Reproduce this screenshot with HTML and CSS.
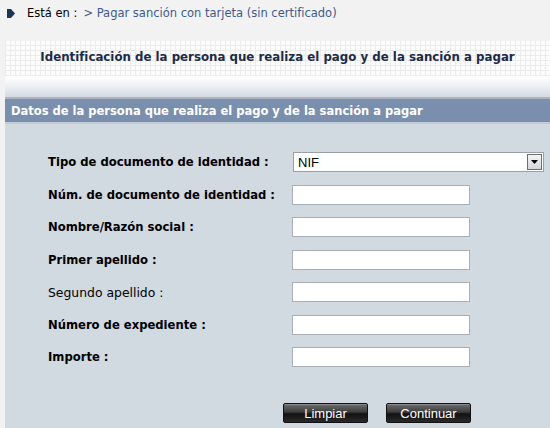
FILE: index.html
```html
<!DOCTYPE html>
<html lang="es">
<head>
<meta charset="utf-8">
<title>Pagar sanción con tarjeta</title>
<link rel="stylesheet" href="styles.css">
</head>
<body>
<div class="breadcrumb">
  <svg class="bc-icon" width="10" height="11" viewBox="0 0 10 11"><path d="M1 1 H5 L9 5.5 L5 10 H1 Z" fill="#1c3555"/></svg>
  <span class="bc-label">Está en :</span>
  <span class="bc-link">&gt; Pagar sanción con tarjeta (sin certificado)</span>
</div>
<div class="panel">
  <div class="panel-title">Identificación de la persona que realiza el pago y de la sanción a pagar</div>
  <div class="panel-fade"></div>
  <div class="section-head">Datos de la persona que realiza el pago y de la sanción a pagar</div>
  <div class="form">
    <div class="row">
      <label class="lbl">Tipo de documento de identidad :</label>
      <div class="select"><span class="select-val">NIF</span><span class="select-btn"><svg width="7" height="4" viewBox="0 0 7 4"><path d="M0 0 H7 L3.5 4 Z" fill="#000"/></svg></span></div>
    </div>
    <div class="row">
      <label class="lbl">Núm. de documento de identidad :</label>
      <input class="inp" type="text">
    </div>
    <div class="row">
      <label class="lbl">Nombre/Razón social :</label>
      <input class="inp" type="text">
    </div>
    <div class="row">
      <label class="lbl">Primer apellido :</label>
      <input class="inp" type="text">
    </div>
    <div class="row">
      <label class="lbl normal">Segundo apellido :</label>
      <input class="inp" type="text">
    </div>
    <div class="row">
      <label class="lbl">Número de expediente :</label>
      <input class="inp" type="text">
    </div>
    <div class="row">
      <label class="lbl">Importe :</label>
      <input class="inp" type="text">
    </div>
    <div class="buttons">
      <button class="btn">Limpiar</button>
      <button class="btn">Continuar</button>
    </div>
  </div>
</div>
</body>
</html>
```

FILE: styles.css
```css
html, body { margin: 0; padding: 0; }
body {
  background: #f2f2f2;
  font-family: "DejaVu Sans", Verdana, sans-serif;
  font-size: 11px;
  color: #000;
  width: 550px;
  height: 428px;
  overflow: hidden;
}
.breadcrumb {
  height: 41px;
  box-sizing: border-box;
  padding: 6px 0 0 6px;
  display: flex;
  align-items: flex-start;
}
.bc-icon { margin-top: 2px; margin-right: 11px; }
.bc-label { margin-right: 6px; font-size: 11.5px; }
.bc-link { color: #3c5a8e; font-size: 11.5px; }
.panel {
  margin-left: 5px;
  background: #fff;
}
.panel-title {
  height: 35px;
  box-sizing: border-box;
  padding-top: 9px;
  text-align: center;
  font-weight: bold;
  color: #1b2b48;
  font-size: 11.8px;
  background-color: #fcfcfc;
  background-image:
    repeating-linear-gradient(90deg, #ebebeb 0 1px, transparent 1px 5px),
    repeating-linear-gradient(0deg, #ebebeb 0 1px, transparent 1px 5px);
}
.panel-fade {
  height: 21px;
  background: linear-gradient(#ffffff, #eceff3 50%, #d3dae4);
  border-bottom: 2px solid #aeb5c0;
}
.section-head {
  height: 25px;
  box-sizing: border-box;
  padding: 5px 0 0 6px;
  background: #7a8eae;
  color: #fff;
  font-weight: bold;
  font-size: 11.5px;
  border-bottom: 2px solid #c2cbd6;
}
.form {
  background: #d1d9e1;
  padding: 28px 0 0 43px;
  height: 310px;
  box-sizing: border-box;
}
.row {
  display: flex;
  align-items: center;
  height: 20px;
  margin-bottom: 12.5px;
}
.lbl {
  width: 244px;
  font-weight: bold;
  font-size: 11.6px;
}
.lbl.normal { font-weight: normal; font-size: 12.4px; }
.inp {
  width: 178px;
  height: 20px;
  box-sizing: border-box;
  border: 1px solid #a9afb6;
  background: #fff;
  margin: 0;
  padding: 0;
}
.select {
  margin-left: 1px;
  width: 251px;
  height: 20px;
  box-sizing: border-box;
  border: 1px solid #9aa0a6;
  background: #fff;
  display: flex;
  align-items: center;
  justify-content: space-between;
}
.select-val {
  font-family: "Liberation Sans", Arial, sans-serif;
  font-size: 13px;
  color: #000;
  padding-left: 4px;
}
.select-btn {
  width: 15px;
  height: 16px;
  margin-right: 1px;
  box-sizing: border-box;
  border: 1px solid #6e6e6e;
  background: linear-gradient(#f4f4f4, #d6d6d6);
  display: flex;
  align-items: center;
  justify-content: center;
}
.buttons {
  display: flex;
  gap: 18px;
  margin-left: 235px;
  margin-top: 36px;
}
.btn {
  width: 85px;
  height: 20px;
  box-sizing: border-box;
  border: 1px solid #111;
  border-radius: 2px;
  background: linear-gradient(#6e6e6e, #3c3c3c 45%, #111 55%, #2a2a2a);
  color: #fff;
  font-family: "Liberation Sans", Arial, sans-serif;
  font-size: 13px;
  padding: 0;
  box-shadow: inset 0 1px 0 #8a8a8a;
}
```
